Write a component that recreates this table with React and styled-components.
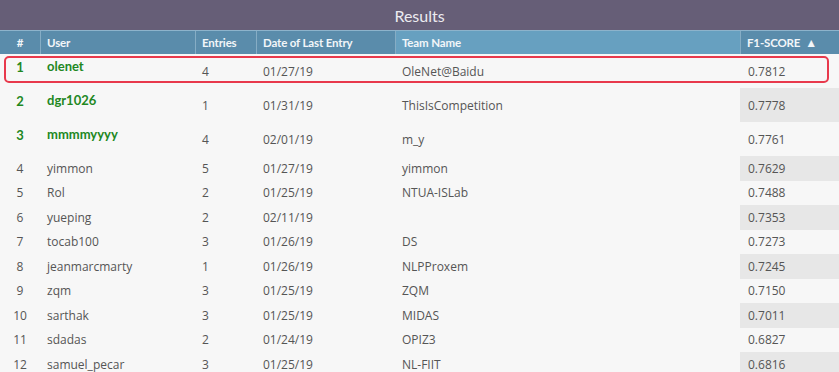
import React from "react";
import styled, { createGlobalStyle } from "styled-components";

const rows = [
  { rank: 1, user: "olenet", entries: 4, date: "01/27/19", team: "OleNet@Baidu", score: "0.7812", top: true, mark: true },
  { rank: 2, user: "dgr1026", entries: 1, date: "01/31/19", team: "ThisIsCompetition", score: "0.7778", top: true },
  { rank: 3, user: "mmmmyyyy", entries: 4, date: "02/01/19", team: "m_y", score: "0.7761", top: true },
  { rank: 4, user: "yimmon", entries: 5, date: "01/27/19", team: "yimmon", score: "0.7629" },
  { rank: 5, user: "Rol", entries: 2, date: "01/25/19", team: "NTUA-ISLab", score: "0.7488" },
  { rank: 6, user: "yueping", entries: 2, date: "02/11/19", team: "", score: "0.7353" },
  { rank: 7, user: "tocab100", entries: 3, date: "01/26/19", team: "DS", score: "0.7273" },
  { rank: 8, user: "jeanmarcmarty", entries: 1, date: "01/26/19", team: "NLPProxem", score: "0.7245" },
  { rank: 9, user: "zqm", entries: 3, date: "01/25/19", team: "ZQM", score: "0.7150" },
  { rank: 10, user: "sarthak", entries: 3, date: "01/25/19", team: "MIDAS", score: "0.7011" },
  { rank: 11, user: "sdadas", entries: 2, date: "01/24/19", team: "OPIZ3", score: "0.6827" },
  { rank: 12, user: "samuel_pecar", entries: 3, date: "01/25/19", team: "NL-FIIT", score: "0.6816" },
];

export default () => {
  return (
    <>
      <GlobalStyle />
      <Page>
        <Title>Results</Title>
        <HeadRow>
          <HeadCell center>#</HeadCell>
          <HeadCell>User</HeadCell>
          <HeadCell>Entries</HeadCell>
          <HeadCell>Date of Last Entry</HeadCell>
          <HeadCell light>Team Name</HeadCell>
          <HeadCell>
            F1-SCORE<Arrow>▲</Arrow>
          </HeadCell>
        </HeadRow>
        {rows.map((r, i) => (
          <Row key={r.rank} top={r.top} mark={r.mark}>
            <Rank top={r.top}>{r.rank}</Rank>
            <UserCell top={r.top}>{r.user}</UserCell>
            <Cell>{r.entries}</Cell>
            <Cell>{r.date}</Cell>
            <Cell>{r.team}</Cell>
            <Score shade={i % 2 === 1}>{r.score}</Score>
          </Row>
        ))}
      </Page>
    </>
  );
};

const GlobalStyle = createGlobalStyle`
  body {
    margin: 0;
    background: #f7f7f7;
    font-family: "Open Sans", "Noto Sans", sans-serif;
    overflow: hidden;
  }
`;

const cols = "40px 155px 61px 139px 345px 1fr";

const Page = styled.div`
  width: 839px;
  height: 372px;
  background: #f7f7f7;
  overflow: hidden;
`;

const Title = styled.div`
  height: 30px;
  background: #665e77;
  color: #ecebf0;
  font-family: Lato, "Open Sans", sans-serif;
  font-size: 16px;
  font-weight: 400;
  display: flex;
  align-items: center;
  justify-content: center;
`;

const HeadRow = styled.div`
  display: grid;
  grid-template-columns: ${cols};
  height: 24px;
  border-top: 1px solid #8db3cb;
  box-sizing: border-box;
  background: #5a8cab;
`;

const HeadCell = styled.div`
  display: flex;
  align-items: center;
  justify-content: ${(p) => (p.center ? "center" : "flex-start")};
  padding-left: ${(p) => (p.center ? "0" : "6px")};
  color: #f2f6f9;
  font-family: Lato, "Open Sans", sans-serif;
  font-size: 11.5px;
  letter-spacing: -0.15px;
  font-weight: 700;
  background: ${(p) => (p.light ? "#67a0c0" : "transparent")};
  border-left: 1px solid #86adc5;
  white-space: nowrap;
  &:first-child {
    border-left: none;
  }
`;

const Arrow = styled.span`
  font-size: 12px;
  margin-left: 5px;
`;

const Row = styled.div`
  position: relative;
  display: grid;
  grid-template-columns: ${cols};
  height: ${(p) => (p.top ? "34px" : "24.5px")};
  color: #555;
  font-size: 12px;

  ${(p) =>
    p.mark &&
    `
    &::after {
      content: "";
      position: absolute;
      left: 4px;
      right: 10px;
      top: 2px;
      bottom: 5px;
      border: 2px solid #e8394c;
      border-radius: 5px;
      pointer-events: none;
    }
  `}
`;

const Cell = styled.div`
  display: flex;
  align-items: center;
  padding-left: 7px;
  white-space: nowrap;
`;

const Rank = styled(Cell)`
  justify-content: center;
  padding-left: 0;
  ${(p) =>
    p.top &&
    `
    align-items: flex-start;
    padding-top: 5px;
    color: #22881f;
    font-family: Lato, "Open Sans", sans-serif;
    font-size: 13px;
    font-weight: 700;
  `}
`;

const UserCell = styled(Cell)`
  ${(p) =>
    p.top &&
    `
    align-items: flex-start;
    padding-top: 4px;
    color: #22881f;
    font-family: Lato, "Open Sans", sans-serif;
    font-weight: 700;
    font-size: 13px;
  `}
`;

const Score = styled(Cell)`
  padding-left: 8px;
  background: ${(p) => (p.shade ? "#e7e7e7" : "transparent")};
`;
